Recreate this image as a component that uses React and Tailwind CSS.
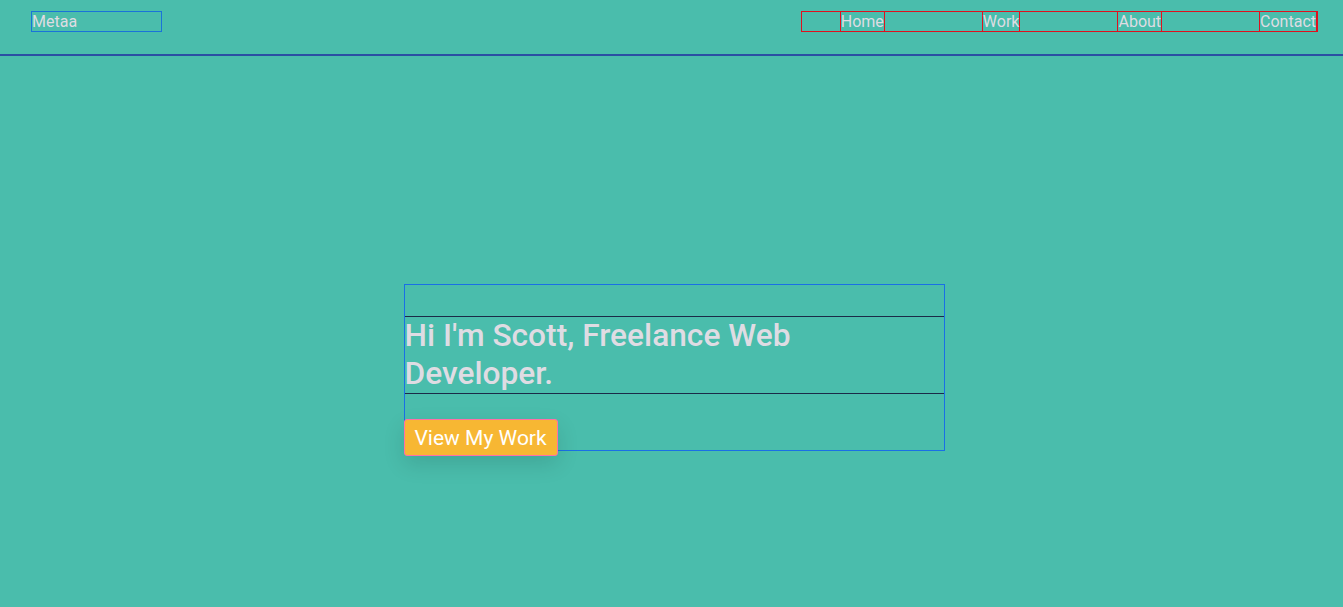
import React from 'react';

const links = ['Home', 'Work', 'About', 'Contact'];

const App = () => {
  return (
    <div
      className="min-h-[607px] bg-[#4abdac] text-[#dfdce3]"
      style={{ fontFamily: 'Roboto, "Liberation Sans", sans-serif' }}
    >
      {/* header */}
      <header className="flex items-start justify-between h-[56px] pt-[11px] pl-[31px] pr-[25px] border-b-2 border-[#2b4fa3]">
        <div className="w-[131px] border border-[#1a73d9] text-base leading-[19px]">Metaa</div>
        <ul className="flex gap-[97px] pl-[38px] border border-[#e0101e]">
          {links.map((l) => (
            <li key={l} className="border-x border-[#e0101e] text-base leading-[19px]">
              <a href="#">{l}</a>
            </li>
          ))}
        </ul>
      </header>

      {/* hero */}
      <main className="flex justify-center pl-[5px] pt-[228px]">
        <div className="w-[541px] h-[167px] border border-[#1a6fe6] pt-[31px]">
          <h1 className="border-y border-[#1b2a48] text-[31.7px] leading-[38px] font-medium">
            Hi I'm Scott, Freelance Web Developer.
          </h1>
          <div className="pt-[25px]">
            <a
              href="#"
              className="inline-block -ml-px h-[37px] px-[10px] bg-[#f7b733] text-white text-[21px] leading-[36px] border border-[#ff6fa8] rounded-[3px] shadow-[0_8px_22px_rgba(0,0,0,0.12)]"
            >
              View My Work
            </a>
          </div>
        </div>
      </main>
    </div>
  );
};

export default App;
